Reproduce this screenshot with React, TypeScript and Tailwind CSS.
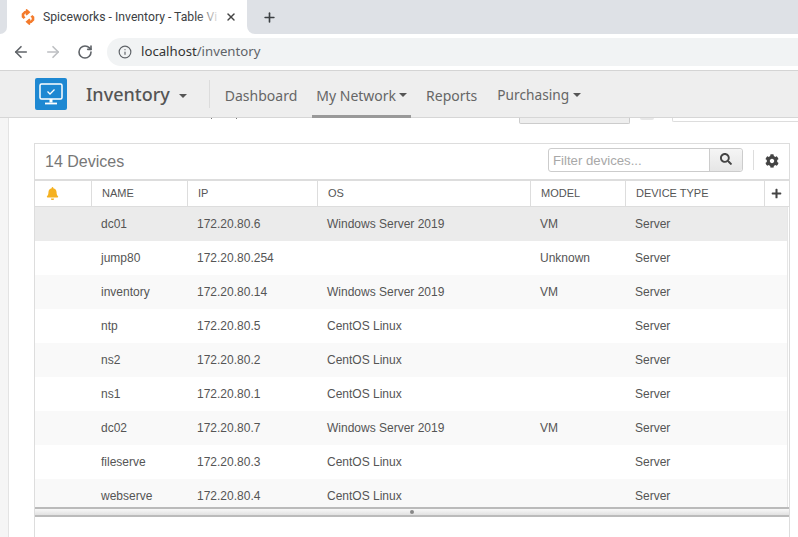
import React from "react";
import { ArrowLeft, ArrowRight, RotateCw, Info, X, Plus } from "lucide-react";
import { FaBell, FaCog, FaPlus, FaSearch } from "react-icons/fa";

const rows = [
  ["dc01", "172.20.80.6", "Windows Server 2019", "VM", "Server"],
  ["jump80", "172.20.80.254", "", "Unknown", "Server"],
  ["inventory", "172.20.80.14", "Windows Server 2019", "VM", "Server"],
  ["ntp", "172.20.80.5", "CentOS Linux", "", "Server"],
  ["ns2", "172.20.80.2", "CentOS Linux", "", "Server"],
  ["ns1", "172.20.80.1", "CentOS Linux", "", "Server"],
  ["dc02", "172.20.80.7", "Windows Server 2019", "VM", "Server"],
  ["fileserve", "172.20.80.3", "CentOS Linux", "", "Server"],
  ["webserve", "172.20.80.4", "CentOS Linux", "", "Server"],
];

const Caret = ({ className }: { className: string }) => (
  <span className={`inline-block border-x-[4px] border-t-[4px] border-x-transparent border-t-[#555] ${className}`} />
);

const SpiceLogo = () => (
  <svg width="16" height="16" viewBox="0 0 16 16" fill="none" stroke="#f47b2c" strokeWidth="2.6">
    <path d="M7.5 3.2H5L3 5.2v2.4l1.6 1.6" />
    <path d="M8.5 12.8H11l2-2V8.4l-1.6-1.6" />
    <path d="M6 0.6 9 3.2 6 5.8" strokeWidth="2" fill="#f47b2c" />
    <path d="M10 15.4 7 12.8 10 10.2" strokeWidth="2" fill="#f47b2c" />
  </svg>
);

const MonitorCheck = () => (
  <svg width="24" height="22" viewBox="0 0 24 22" fill="none" stroke="white">
    <rect x="1" y="1" width="22" height="15" rx="1.5" strokeWidth="1.5" />
    <path d="M8.5 8.5l2.5 2.5 4.5-4.5" strokeWidth="1.3" />
    <path d="M12 16v3.5" strokeWidth="3" />
    <path d="M6 20.5h12" strokeWidth="1.8" />
  </svg>
);

export default function App() {
  return (
    <div className="h-[537px] w-[798px] overflow-hidden bg-white flex flex-col font-['Liberation_Sans',sans-serif]">
      {/* browser tab strip */}
      <div className="h-[34px] flex shrink-0">
        <div className="w-[7px] bg-white">
          <div className="h-full bg-[#dee1e6] rounded-br-lg" />
        </div>
        <div className="relative w-[240px] bg-white rounded-t-lg flex items-center pl-[13px] pr-[10px]">
          <SpiceLogo />
          <span className="ml-[7px] w-[176px] overflow-hidden whitespace-nowrap text-[12.2px] text-[#3c4043] font-['Roboto',sans-serif]">
            Spiceworks - Inventory - Table Vi
          </span>
          <div className="absolute left-[190px] top-[8px] w-[24px] h-[18px] bg-gradient-to-r from-transparent to-white" />
          <X size={12} strokeWidth={2.8} className="ml-auto text-[#444]" />
        </div>
        <div className="w-[8px] bg-white">
          <div className="h-full bg-[#dee1e6] rounded-bl-lg" />
        </div>
        <div className="flex-1 bg-[#dee1e6] flex items-center pl-[7px]">
          <Plus size={15} strokeWidth={2.6} className="text-[#3c4043]" />
        </div>
      </div>

      {/* address bar */}
      <div className="h-[37px] shrink-0 flex items-center border-b border-[#d4d4d4] pb-px">
        <ArrowLeft size={18} strokeWidth={2.2} className="ml-[12px] text-[#5f6368]" />
        <ArrowRight size={18} strokeWidth={2.2} className="ml-[14px] text-[#bdbfc2]" />
        <RotateCw size={16} strokeWidth={2.4} className="ml-[15px] text-[#5f6368]" />
        <div className="ml-[14px] h-[28px] flex-1 bg-[#f1f3f4] rounded-l-full flex items-center pl-[11px]">
          <Info size={14} strokeWidth={2} className="text-[#5f6368]" />
          <span className="ml-[9px] mt-[1px] text-[13.2px] text-[#333] font-['Noto_Sans',sans-serif]">
            localhost<span className="text-[#5f6368]">/inventory</span>
          </span>
        </div>
      </div>

      {/* app nav */}
      <div className="h-[47px] shrink-0 bg-[#eeeeee] border-b border-[#d6d6d6] flex items-center pl-[35px] font-['Noto_Sans',sans-serif]">
        <div className="w-[32px] h-[32px] bg-[#1e88d2] rounded-[2px] flex items-center justify-center">
          <MonitorCheck />
        </div>
        <span className="ml-[19px] text-[18px] font-medium text-[#555]">Inventory</span>
        <Caret className="ml-[9px] mt-[3px]" />
        <div className="ml-[22px] w-px h-[28px] bg-[#dcdcdc]" />
        <a className="ml-[15px] mt-[2px] text-[14px] text-[#666]">Dashboard</a>
        <div className="ml-[19px] self-stretch relative flex items-center">
          <a className="mt-[2px] text-[14px] text-[#666]">My Network</a>
          <Caret className="ml-[3px] mt-[2px]" />
          <div className="absolute -left-[4px] -right-[4px] bottom-[-1px] h-[3px] bg-[#999]" />
        </div>
        <a className="ml-[19px] mt-[2px] text-[14px] text-[#666]">Reports</a>
        <a className="ml-[20px] mt-[3px] text-[13.7px] text-[#666]">Purchasing</a>
        <Caret className="ml-[4px] mt-[2px]" />
      </div>

      {/* page */}
      <div className="flex-1 min-h-0 bg-[#f5f5f5] pl-[8px]">
        <div className="h-full bg-white border-l border-[#e3e3e3] pl-[25px] pr-[8px] overflow-hidden">
          {/* clipped toolbar under the nav */}
          <div className="h-[25px] flex items-start">
            <div className="ml-[177px] w-px h-[1px] bg-[#777]" />
            <div className="ml-[24px] w-px h-[1px] bg-[#777]" />
            <div className="ml-[282px] w-[111px] h-[6px] bg-[#eeeeee] border border-t-0 border-[#cccccc] rounded-b-[2px]" />
            <div className="ml-[10px] w-[14px] h-[2px] bg-[#e8e8e8] rounded-b-full" />
            <div className="ml-[18px] flex-1 -mr-[8px] h-[4px] border-l border-b border-[#dddddd] rounded-bl-[2px]" />
          </div>

          {/* devices panel */}
          <div className="h-[401px] border-x border-t border-[#dddddd]">
            <div className="h-[37px] flex items-center pl-[10px] pr-[11px] border-b-2 border-[#dddddd]">
              <span className="text-[16px] text-[#777]">14 Devices</span>
              <div className="ml-auto flex h-[24px] w-[195px] rounded-[3px] border border-[#cccccc] -mt-[3px]">
                <span className="flex-1 pl-[4px] text-[13.2px] leading-[24px] text-[#a8a8a8]">Filter devices...</span>
                <div className="w-[33px] border-l border-[#cccccc] bg-gradient-to-b from-[#f5f5f5] to-[#e6e6e6] rounded-r-[3px] flex items-center justify-center">
                  <FaSearch size={12} className="text-[#444] -mt-[2px]" />
                </div>
              </div>
              <div className="ml-[10px] mr-[11px] w-px h-[20px] bg-[#dddddd] -mt-[3px]" />
              <FaCog size={14} className="text-[#444] -mt-[1px] -mr-[1px]" />
            </div>

            <div className="h-[26px] flex items-center border-b border-[#dddddd] text-[11px] text-[#555]">
              <div className="w-[57px] h-full flex items-center pl-[11px] border-r border-[#dddddd]">
                <FaBell size={13} className="text-[#f5b120]" />
              </div>
              <div className="w-[96px] h-full flex items-center pl-[10px] border-r border-[#dddddd]">NAME</div>
              <div className="w-[130px] h-full flex items-center pl-[10px] border-r border-[#dddddd]">IP</div>
              <div className="w-[213px] h-full flex items-center pl-[10px] border-r border-[#dddddd]">OS</div>
              <div className="w-[95px] h-full flex items-center pl-[10px] border-r border-[#dddddd]">MODEL</div>
              <div className="w-[139px] h-full flex items-center pl-[10px] border-r border-[#dddddd]">DEVICE TYPE</div>
              <div className="flex-1 flex items-center justify-center pr-[2px]">
                <FaPlus size={11} className="text-[#444] -mt-[1px]" />
              </div>
            </div>

            <div className="h-[300px] overflow-hidden mr-[1px] border-r border-[#e6e6e6]">
              {rows.map((r, i) => (
                <div key={r[0]} className={`h-[34px] flex items-center text-[12px] text-[#555] ${i % 2 === 0 ? (i === 0 ? "bg-[#ebebeb]" : "bg-[#f9f9f9]") : "bg-white"}`}>
                  <div className="w-[57px]" />
                  <div className="w-[96px] pl-[9px]">{r[0]}</div>
                  <div className="w-[130px] pl-[9px]">{r[1]}</div>
                  <div className="w-[213px] pl-[9px]">{r[2]}</div>
                  <div className="w-[95px] pl-[9px]">{r[3]}</div>
                  <div className="w-[139px] pl-[9px]">{r[4]}</div>
                </div>
              ))}
            </div>

            {/* splitter */}
            <div className="h-[10px] bg-gradient-to-b from-[#f8f8f8] to-[#e2e2e2] border-t-2 border-b-2 border-[#bbbbbb] flex items-center justify-center">
              <div className="w-[4px] h-[4px] rounded-full bg-[#888] -ml-[1px]" />
            </div>
          </div>
        </div>
      </div>
    </div>
  );
}
